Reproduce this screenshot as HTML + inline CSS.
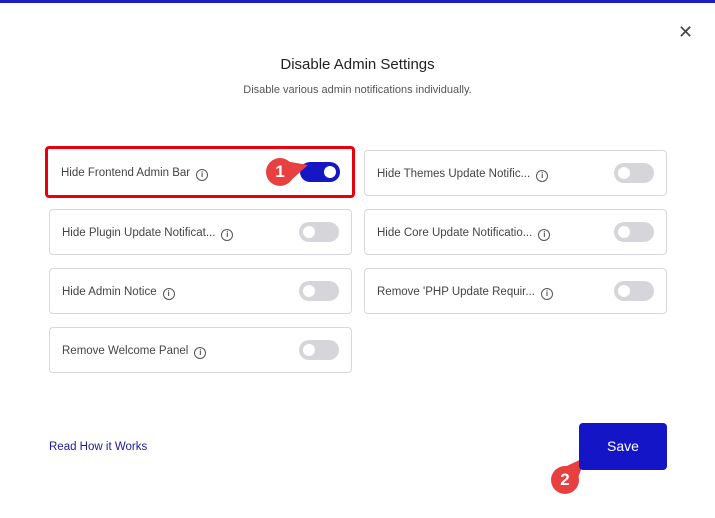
<!DOCTYPE html>
<html><head><style>
body{margin:0;width:715px;height:518px;background:#fff;font-family:"Liberation Sans",sans-serif;position:relative;overflow:hidden}
.top{position:absolute;left:0;top:0;width:715px;height:3px;background:#1d1dc4}
.x{position:absolute;left:678px;top:22px;font-size:18px;color:#444}
h1{position:absolute;top:56px;left:0;width:715px;text-align:center;font-size:15px;font-weight:normal;color:#222;margin:0}
.sub{position:absolute;top:84px;left:0;width:715px;text-align:center;font-size:11px;color:#555}
.card{position:absolute;width:303px;height:46px;border:1px solid #d8d8dc;border-radius:4px;box-sizing:border-box}
.card span{position:absolute;left:12px;top:17px;font-size:11.5px;color:#444;white-space:nowrap}
.i{display:inline-block;width:10px;height:10px;border:1px solid #555;border-radius:50%;font-size:8px;line-height:10px;text-align:center;margin-left:6px;vertical-align:-1px;font-weight:bold;color:#555;font-style:normal}
.tg{position:absolute;right:12px;top:12px;width:40px;height:20px;border-radius:10px;background:#d6d6da}
.tg:after{content:"";position:absolute;left:4px;top:4px;width:12px;height:12px;border-radius:50%;background:#fff}
.tg.on{background:#1616c4}.tg.on:after{left:24px}
.red{position:absolute;left:45px;top:146px;width:310px;height:52px;border:3px solid #e8000c;border-radius:4px;box-sizing:border-box}
.badge{position:absolute;width:28px;height:28px;border-radius:50%;background:#e84040;color:#fff;font-weight:bold;font-size:17px;text-align:center;line-height:28px}
.link{position:absolute;left:49px;top:441px;font-size:11.5px;color:#1a1a9c}
.save{position:absolute;left:579px;top:423px;width:88px;height:47px;background:#1515c8;border-radius:4px;color:#fff;font-size:14px;text-align:center;line-height:47px}
</style></head><body>
<div class="top"></div>
<div class="x">✕</div>
<h1>Disable Admin Settings</h1>
<div class="sub">Disable various admin notifications individually.</div>

<div class="card" style="left:49px;top:150px;border:none"><span>Hide Frontend Admin Bar<i class="i">i</i></span><div class="tg on"></div></div>
<div class="red"></div>
<div class="card" style="left:364px;top:150px"><span>Hide Themes Update Notific...<i class="i">i</i></span><div class="tg"></div></div>
<div class="card" style="left:49px;top:209px"><span>Hide Plugin Update Notificat...<i class="i">i</i></span><div class="tg"></div></div>
<div class="card" style="left:364px;top:209px"><span>Hide Core Update Notificatio...<i class="i">i</i></span><div class="tg"></div></div>
<div class="card" style="left:49px;top:268px"><span>Hide Admin Notice<i class="i">i</i></span><div class="tg"></div></div>
<div class="card" style="left:364px;top:268px"><span>Remove 'PHP Update Requir...<i class="i">i</i></span><div class="tg"></div></div>
<div class="card" style="left:49px;top:327px"><span>Remove Welcome Panel<i class="i">i</i></span><div class="tg"></div></div>

<svg style="position:absolute;left:0;top:0" width="715" height="518"><polygon points="285,161 308,165 288,183" fill="#e84040"/><polygon points="558,470 586,457 574,488" fill="#e84040"/></svg>
<div class="badge" style="left:266px;top:158px">1</div>
<div class="badge" style="left:551px;top:466px">2</div>

<div class="link">Read How it Works</div>
<div class="save">Save</div>
</body></html>
